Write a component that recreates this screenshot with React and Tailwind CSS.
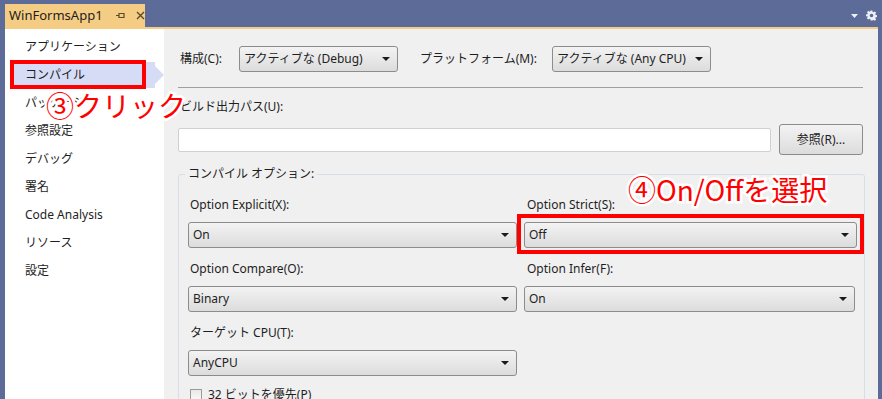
import { ChevronDown } from 'lucide-react';

const NAV = ['アプリケーション', 'コンパイル', 'パッケージ', '参照設定', 'デバッグ', '署名', 'Code Analysis', 'リソース', '設定'];

function Arrow() {
  return (
    <svg width="8" height="4" viewBox="0 0 8 4" className="shrink-0">
      <path d="M0 0 H8 L4 4 Z" fill="#1a1a1a" />
    </svg>
  );
}

function Combo({ text, w }) {
  return (
    <div
      className="h-[26px] flex items-center justify-between pl-[4px] pr-[7px] border border-[#8c8c8c] rounded-[3px] bg-gradient-to-b from-[#f3f3f3] to-[#dcdcdc] text-[12px] text-[#1e1e1e] shrink-0"
      style={{ width: w }}
    >
      <span className="leading-none">{text}</span>
      <Arrow />
    </div>
  );
}

function Label({ children, className = '' }) {
  return <div className={`h-[16px] leading-[16px] text-[12px] text-[#1e1e1e] whitespace-nowrap ${className}`}>{children}</div>;
}

export default function App() {
  return (
    <div className="w-[882px] h-[399px] bg-[#5d6b99] flex flex-col overflow-hidden relative font-['Noto_Sans','Noto_Sans_CJK_JP',sans-serif]">
      {/* tab strip */}
      <div className="h-[27px] flex items-end pl-[5px] pr-[4px] shrink-0">
        <div className="w-[140px] h-[23px] bg-[#f5cc84] flex items-center pl-[4px] text-[13px] text-[#1e1e1e]">
          <span>WinFormsApp1</span>
          <svg width="9" height="7" viewBox="0 0 9 7" className="ml-[13px]">
            <path d="M0 3.5 H3 M3 1 V6 M3 1.5 H8 V5.5 H3" stroke="#5a4a2a" strokeWidth="1.2" fill="none" />
          </svg>
          <svg width="9" height="9" viewBox="0 0 9 9" className="ml-[11px]">
            <path d="M1 1 L8 8 M8 1 L1 8" stroke="#5a4a2a" strokeWidth="1.4" />
          </svg>
        </div>
        <div className="flex-1" />
        <div className="h-[23px] flex items-center gap-[8px] pr-[1px]">
          <svg width="7" height="4" viewBox="0 0 7 4"><path d="M0 0 H7 L3.5 4 Z" fill="#eef0f8" /></svg>
          <svg width="11" height="11" viewBox="0 0 24 24" fill="#eef0f8">
            <path d="M10 1h4l.6 3.1 2 .9 2.7-1.8 2.8 2.8-1.8 2.7.9 2 3.1.6v4l-3.1.6-.9 2 1.8 2.7-2.8 2.8-2.7-1.8-2 .9L14 23h-4l-.6-3.1-2-.9-2.7 1.8-2.8-2.8 1.8-2.7-.9-2L0 14v-4l3.1-.6.9-2-1.8-2.7 2.8-2.8 2.7 1.8 2-.9z M12 8a4 4 0 100 8 4 4 0 000-8z" fillRule="evenodd" />
          </svg>
        </div>
      </div>
      <div className="h-[2px] bg-[#f5cc84] ml-[5px] mr-[4px] shrink-0" />

      {/* body */}
      <div className="flex-1 flex ml-[5px] mr-[4px] min-h-0">
        <div className="w-[159px] bg-white pt-[4px] shrink-0">
          {NAV.map((n, i) => (
            <div key={n} className="h-[28px] flex items-center relative">
              {i === 1 && (
                <>
                  <div className="absolute left-[5px] right-[9px] top-[1px] bottom-[1px] bg-[#d6dcf5]" />
                  <div className="absolute right-0 top-[5px] w-0 h-0 border-y-[9px] border-y-transparent border-l-[9px] border-l-[#d6dcf5]" />
                </>
              )}
              <span className="relative pl-[20px] text-[12px] text-[#1e1e1e]">{n}</span>
            </div>
          ))}
        </div>

        <div className="flex-1 bg-[#f0f0f0] pl-[14px] pt-[17px]">
          <div className="flex items-center h-[26px]">
            <Label className="w-[61px] pl-[2px]">構成(C):</Label>
            <Combo text="アクティブな (Debug)" w={159} />
            <Label className="w-[132px] ml-[22px]">プラットフォーム(M):</Label>
            <Combo text="アクティブな (Any CPU)" w={159} />
          </div>
          <div className="w-[685px] mt-[15px] border-t border-[#a0a0a0]" />
          <Label className="mt-[11px] pl-[2px]">ビルド出力パス(U):</Label>
          <div className="flex items-center gap-[8px] mt-[9px] w-[685px]">
            <div className="w-[593px] h-[24px] bg-white border border-[#d0d0d0] rounded-[2px]" />
            <div className="w-[84px] h-[31px] flex items-center justify-center border border-[#8c8c8c] rounded-[3px] bg-gradient-to-b from-[#f3f3f3] to-[#dcdcdc] text-[12px] text-[#1e1e1e]">
              参照(R)...
            </div>
          </div>

          <div className="relative w-[687px] mt-[19px] h-[240px] border border-[#d5dfe5] rounded-[3px] pl-[9px] pt-[22px]">
            <div className="absolute left-[6px] top-[-9px] px-[3px] bg-[#f0f0f0] text-[12px] leading-[16px] text-[#1e1e1e]">
              コンパイル オプション:
            </div>
            <div className="flex gap-[7px]">
              <div>
                <Label className="pl-[2px]">Option Explicit(X):</Label>
                <div className="mt-[9px]"><Combo text="On" w={329} /></div>
              </div>
              <div>
                <Label className="pl-[3px]">Option Strict(S):</Label>
                <div className="mt-[9px]"><Combo text="Off" w={333} /></div>
              </div>
            </div>
            <div className="flex gap-[7px] mt-[13px]">
              <div>
                <Label className="pl-[2px]">Option Compare(O):</Label>
                <div className="mt-[9px]"><Combo text="Binary" w={329} /></div>
              </div>
              <div>
                <Label className="pl-[3px]">Option Infer(F):</Label>
                <div className="mt-[9px]"><Combo text="On" w={331} /></div>
              </div>
            </div>
            <Label className="mt-[13px] pl-[2px]">ターゲット CPU(T):</Label>
            <div className="mt-[9px]"><Combo text="AnyCPU" w={329} /></div>
            <div className="flex items-center mt-[11px] pl-[2px]">
              <div className="w-[12px] h-[12px] border border-[#9a9a9a] bg-gradient-to-b from-[#e8e8e8] to-[#f8f8f8]" />
              <Label className="ml-[6px]">32 ビットを優先(P)</Label>
            </div>
          </div>
        </div>
      </div>

      {/* annotations */}
      <div className="absolute left-[10px] top-[60px] w-[136px] h-[29px] border-[4px] border-[#ff0000]" />
      <div className="absolute left-[517px] top-[214px] w-[347px] h-[40px] border-[4px] border-[#ff0000]" />
      <div className="absolute left-[46px] top-[87px] text-[28px] leading-[36px] text-[#ff0000] [-webkit-text-stroke:5px_white] [paint-order:stroke_fill] font-normal font-['Noto_Sans_CJK_JP',sans-serif]">
        ③クリック
      </div>
      <div className="absolute left-[628px] top-[171px] text-[28px] leading-[36px] text-[#ff0000] [-webkit-text-stroke:5px_white] [paint-order:stroke_fill] font-normal font-['Noto_Sans_CJK_JP',sans-serif]">
        ④On/Offを選択
      </div>
    </div>
  );
}
